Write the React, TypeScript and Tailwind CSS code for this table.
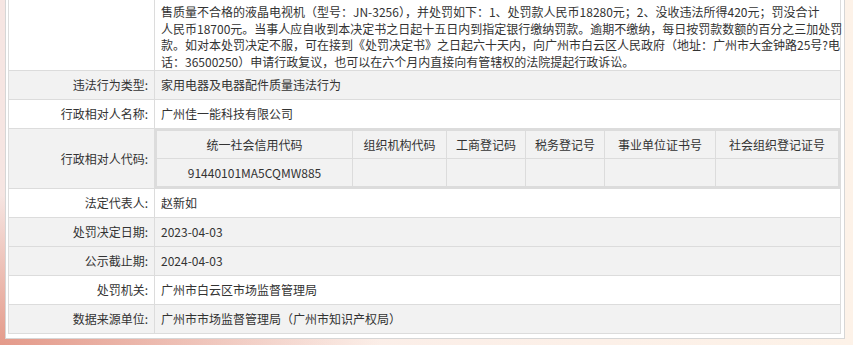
const font = "font-['Microsoft_YaHei','Noto_Sans_CJK_SC',sans-serif]";

type Row = { label: string; value?: string; gray?: boolean };

const penaltyLines = [
  "售质量不合格的液晶电视机（型号：JN-3256），并处罚如下：1、处罚款人民币18280元；2、没收违法所得420元；罚没合计",
  "人民币18700元。当事人应自收到本决定书之日起十五日内到指定银行缴纳罚款。逾期不缴纳，每日按罚款数额的百分之三加处罚",
  "款。如对本处罚决定不服，可在接到《处罚决定书》之日起六十天内，向广州市白云区人民政府（地址：广州市大金钟路25号?电",
  "话：36500250）申请行政复议，也可以在六个月内直接向有管辖权的法院提起行政诉讼。",
];

const codeHeads = [
  "统一社会信用代码",
  "组织机构代码",
  "工商登记码",
  "税务登记号",
  "事业单位证书号",
  "社会组织登记证号",
];
const codeValues = ["91440101MA5CQMW885", "", "", "", "", ""];

const topRows: Row[] = [
  { label: "违法行为类型:", value: "家用电器及电器配件质量违法行为", gray: true },
  { label: "行政相对人名称:", value: "广州佳一能科技有限公司" },
];

const bottomRows: Row[] = [
  { label: "法定代表人:", value: "赵新如" },
  { label: "处罚决定日期:", value: "2023-04-03", gray: true },
  { label: "公示截止期:", value: "2024-04-03", gray: true },
  { label: "处罚机关:", value: "广州市白云区市场监督管理局" },
  { label: "数据来源单位:", value: "广州市市场监督管理局（广州市知识产权局）", gray: true },
];

const InfoRow = ({ label, value, gray }: Row) => (
  <div className={`flex h-[29px] border-b border-[#dcdcdc] ${gray ? "bg-[#f2f2f2]" : "bg-white"}`}>
    <div className="w-[146px] shrink-0 border-r border-[#dcdcdc] pr-[6px] flex items-center justify-end">
      {label}
    </div>
    <div className="flex-1 pl-[6px] flex items-center">{value}</div>
  </div>
);

const CodeTable = () => (
  <div className="border-2 border-[#dcdcdc] grid grid-cols-[196px_94px_79px_79px_111px_1fr] text-center">
    {codeHeads.map((h, i) => (
      <div
        key={h}
        className={`h-[28px] flex items-center justify-center border-b border-[#dcdcdc] ${i < 5 ? "border-r" : ""}`}
      >
        {h}
      </div>
    ))}
    {codeValues.map((v, i) => (
      <div
        key={i}
        className={`h-[27px] flex items-center justify-center border-[#dcdcdc] ${i < 5 ? "border-r" : ""}`}
      >
        {v}
      </div>
    ))}
  </div>
);

export default function App() {
  return (
    <div
      className={`h-[345px] w-full overflow-hidden pl-[5px] pr-[8px] text-[12px] text-[#333] ${font} bg-[radial-gradient(ellipse_380px_150px_at_0%_100%,#e49a8a,transparent),linear-gradient(90deg,#f6e5e2,#fbeee8_40%,#fdf2e8)]`}
    >
      <div className="bg-white border border-t-0 border-[#d6d6d6] pl-[2px] pr-[3px] pb-[4px]">
        <div className="border-l border-r border-[#dcdcdc]">
          {/* penalty content, continued from above */}
          <div className="flex h-[71px] border-b border-[#dcdcdc] bg-white">
            <div className="w-[146px] shrink-0 border-r border-[#dcdcdc]" />
            <div className="flex-1 pl-[6px] pt-[4px] leading-[16.5px]">
              {penaltyLines.map((l) => (
                <div key={l} className="whitespace-nowrap">
                  {l}
                </div>
              ))}
            </div>
          </div>

          {topRows.map((r) => (
            <InfoRow key={r.label} {...r} />
          ))}

          <div className="flex border-b border-[#dcdcdc] bg-[#f2f2f2]">
            <div className="w-[146px] shrink-0 border-r border-[#dcdcdc] pr-[6px] flex items-center justify-end">
              行政相对人代码:
            </div>
            <div className="flex-1">
              <CodeTable />
            </div>
          </div>

          {bottomRows.map((r) => (
            <InfoRow key={r.label} {...r} />
          ))}
        </div>
      </div>
    </div>
  );
}
